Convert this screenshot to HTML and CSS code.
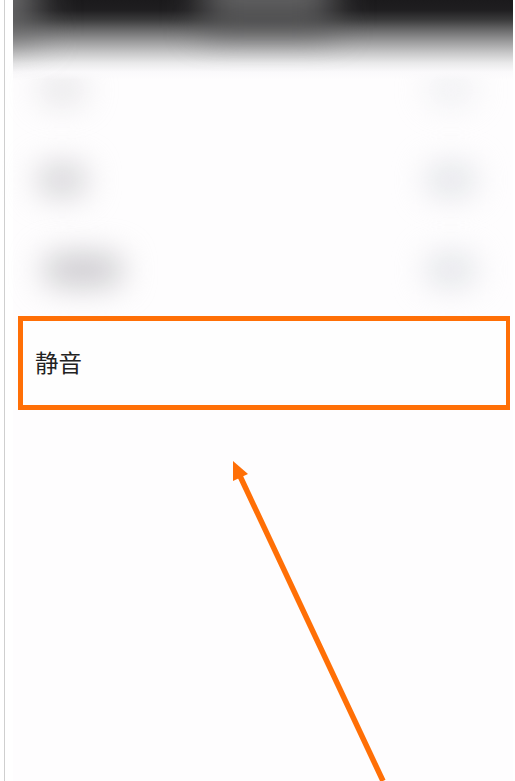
FILE: index.html
```html
<!DOCTYPE html>
<html>
<head>
  <title>静音</title>
  <link rel="stylesheet" href="styles.css">
</head>
<body>
  <div class="screen">
    <div class="top-bar">
      <div class="top-glow"></div>
      <div class="top-edge"></div>
    </div>
    <div class="list">
      <div class="row">
        <div class="smudge smudge-left smudge-faint"></div>
        <div class="smudge smudge-right smudge-faint"></div>
      </div>
      <div class="row">
        <div class="smudge smudge-left"></div>
        <div class="smudge smudge-right"></div>
      </div>
      <div class="row">
        <div class="smudge smudge-left smudge-wide"></div>
        <div class="smudge smudge-right"></div>
      </div>
      <div class="row-marked">
        <span class="row-label">静音</span>
      </div>
    </div>
    <!-- arrow pointing at the marked row -->
    <svg class="arrow" width="515" height="781" viewBox="0 0 515 781">
      <line x1="240" y1="476" x2="383" y2="781" stroke="#ff6f06" stroke-width="5.5"/>
      <polygon points="233,461 248,474 233,481" fill="#ff6f06"/>
    </svg>
  </div>
</body>
</html>
```

FILE: styles.css
```css
body {
  margin: 0;
  background-color: #fff;
  font-family: "Liberation Sans", "Noto Sans CJK SC", sans-serif;
}

.screen {
  position: relative;
  box-sizing: border-box;
  width: 515px;
  height: 781px;
  padding: 0 2px 0 13px;
  overflow: hidden;
  background-color: #fff;
}

/* thin grey line on the left */
.screen::before {
  content: "";
  position: absolute;
  left: 4px;
  top: 0;
  bottom: 0;
  width: 1px;
  background-color: #cfcfcf;
}

.top-bar {
  position: absolute;
  left: 13px;
  right: 2px;
  top: 0;
  height: 80px;
  overflow: hidden;
  z-index: 1;
  background: linear-gradient(to bottom, #1b1a1c 0, #1f1e20 10px, #3b3b3c 20px, #6e6e6f 31px, #9d9d9e 42px, #c8c8c9 53px, #e9e9ea 63px, rgba(250, 249, 251, 0.85) 72px, rgba(254, 253, 254, 0) 80px);
}

.top-glow {
  position: absolute;
  left: 190px;
  top: -40px;
  width: 130px;
  height: 68px;
  background-color: #606061;
  filter: blur(18px);
}

.top-edge {
  position: absolute;
  left: -40px;
  top: -40px;
  width: 62px;
  height: 76px;
  background-color: #707071;
  filter: blur(20px);
}

.list {
  display: flex;
  flex-direction: column;
  min-height: 100%;
  padding-top: 45px;
  box-sizing: border-box;
  background-color: #fefdfe;
}

.row {
  display: flex;
  align-items: center;
  justify-content: space-between;
  height: 90px;
  padding: 0 37px 0 24px;
}

.smudge {
  height: 30px;
  border-radius: 15px;
  filter: blur(16px);
}

.smudge-left {
  width: 50px;
  background-color: #cfced2;
}

.smudge-right {
  width: 50px;
  background-color: #dfe1e6;
}

.smudge-faint {
  opacity: 0.5;
}

.smudge-wide {
  width: 80px;
  margin-left: 6px;
  background-color: #c6c5c9;
}

.row-marked {
  display: flex;
  align-items: center;
  box-sizing: border-box;
  width: 492px;
  height: 94px;
  margin: 1px 0 0 5px;
  padding: 0 0 2px 12px;
  border: solid #ff6f06;
  border-width: 5px 4px 5px 5px;
  background-color: #fefefe;
}

.row-label {
  font-size: 23.5px;
  color: #222;
}

.arrow {
  position: absolute;
  left: 0;
  top: 0;
}
```
